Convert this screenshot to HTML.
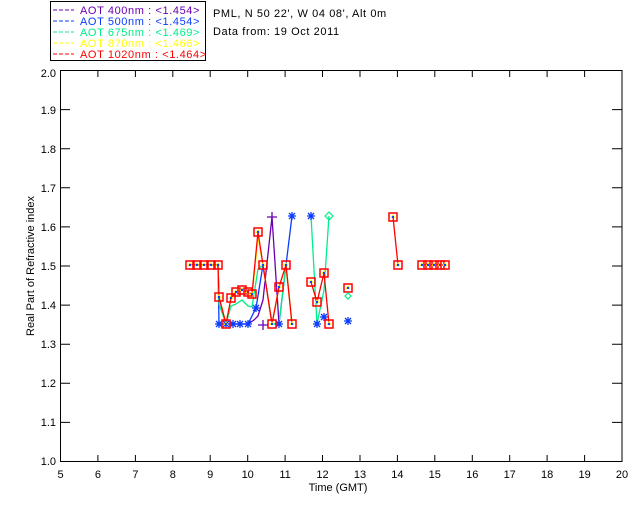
<!DOCTYPE html>
<html><head><style>
body{margin:0;background:#fff;width:640px;height:512px;overflow:hidden}
svg text{font-family:"Liberation Sans",sans-serif;font-size:11px}
.lg text{letter-spacing:0.6px}
</style></head><body>
<svg width="640" height="512" xmlns="http://www.w3.org/2000/svg">
<defs>
<g id="st" stroke="#0a3cff" stroke-width="1.3"><path d="M-4,0h8M0,-4v8M-3,-3l6,6M3,-3l-6,6"/></g>
<g id="sq"><path d="M0,-3l-2.5,4h5z" fill="#ffff00"/><rect x="-4" y="-4" width="8" height="8" fill="none" stroke="#ff0000" stroke-width="1.5"/><circle r="1.2" fill="#0a3cff"/></g>
</defs>
<rect x="50.5" y="1.5" width="155" height="59" fill="none" stroke="#000"/>
<g stroke-width="1" stroke-dasharray="4,2">
<line x1="53" y1="10" x2="74" y2="10" stroke="#6a00b0"/>
<line x1="53" y1="21" x2="74" y2="21" stroke="#0a3cff"/>
<line x1="53" y1="32" x2="74" y2="32" stroke="#00ee88"/>
<line x1="53" y1="43" x2="74" y2="43" stroke="#ffff00"/>
<line x1="53" y1="54" x2="74" y2="54" stroke="#ff0000"/>
</g>
<g class="lg">
<text x="80" y="14" fill="#6a00b0">AOT  400nm : &lt;1.454&gt;</text>
<text x="80" y="25" fill="#0a3cff">AOT  500nm : &lt;1.454&gt;</text>
<text x="80" y="36" fill="#00ee88">AOT  675nm : &lt;1.469&gt;</text>
<text x="80" y="47" fill="#ffff00">AOT  870nm : &lt;1.466&gt;</text>
<text x="80" y="58" fill="#ff0000">AOT 1020nm : &lt;1.464&gt;</text>
<text x="213" y="17" fill="#000">PML, N 50 22', W 04 08', Alt 0m</text>
<text x="213" y="35" fill="#000">Data from: 19 Oct 2011</text>
</g>
<rect x="60.5" y="70.5" width="561.5" height="391" fill="none" stroke="#000"/>
<g stroke="#000">
<path d="M97.9 461v-6M135.4 461v-6M172.8 461v-6M210.2 461v-6M247.7 461v-6M285.1 461v-6M322.5 461v-6M360 461v-6M397.4 461v-6M434.8 461v-6M472.3 461v-6M509.7 461v-6M547.1 461v-6M584.6 461v-6"/>
<path d="M97.9 71v6M135.4 71v6M172.8 71v6M210.2 71v6M247.7 71v6M285.1 71v6M322.5 71v6M360 71v6M397.4 71v6M434.8 71v6M472.3 71v6M509.7 71v6M547.1 71v6M584.6 71v6"/>
<path d="M61 109.6h9M61 148.7h9M61 187.8h9M61 226.9h9M61 266h9M61 305.1h9M61 344.2h9M61 383.3h9M61 422.4h9"/>
<path d="M622 109.6h-10M622 148.7h-10M622 187.8h-10M622 226.9h-10M622 266h-10M622 305.1h-10M622 344.2h-10M622 383.3h-10M622 422.4h-10"/>
</g>
<g fill="#000" text-anchor="end">
<text x="56" y="77">2.0</text><text x="56" y="114">1.9</text><text x="56" y="153">1.8</text><text x="56" y="192">1.7</text><text x="56" y="231">1.6</text><text x="56" y="270">1.5</text><text x="56" y="309">1.4</text><text x="56" y="348">1.3</text><text x="56" y="387">1.2</text><text x="56" y="426">1.1</text><text x="56" y="465">1.0</text>
</g>
<g fill="#000" text-anchor="middle">
<text x="60.5" y="478">5</text><text x="97.9" y="478">6</text><text x="135.4" y="478">7</text><text x="172.8" y="478">8</text><text x="210.2" y="478">9</text><text x="247.7" y="478">10</text><text x="285.1" y="478">11</text><text x="322.5" y="478">12</text><text x="360" y="478">13</text><text x="397.4" y="478">14</text><text x="434.8" y="478">15</text><text x="472.3" y="478">16</text><text x="509.7" y="478">17</text><text x="547.1" y="478">18</text><text x="584.6" y="478">19</text><text x="622" y="478">20</text>
<text x="338" y="491">Time (GMT)</text>
<text transform="translate(34 266) rotate(-90)">Real Part of Refractive index</text>
</g>
<g fill="none" stroke-width="1.3">
<polyline stroke="#6a00b0" points="190,265 218,265 219,297 226,324 233,324 240,324 248,324 254,320 258,316 263,300 272,217 279,324"/>
<polyline stroke="#0a3cff" points="190,265 218,265 219,324 226,324 233,324 240,324 248,324 256,308 263,265 272,324 279,324 286,265 292,216"/>
<polyline stroke="#00ee88" points="190,265 218,265 219,304 226,324 231,306 236,304 242,300 248,306 252,307 258,269 263,265 272,324 279,324 286,265 292,324"/>
<polyline stroke="#ffff00" points="190,265 218,265 219,296 226,324 231,298 236,292 242,290 248,292 252,297 258,238 263,265 272,324 279,287 286,265 292,324"/>
<polyline stroke="#ff0000" points="190,265 218,265 219,297 226,324 231,298 236,292 242,290 248,292 252,294 258,232 263,265 272,324 279,287 286,265 292,324"/>
<polyline stroke="#00ee88" points="311,216 317,324 324,290 329,216"/>
<polyline stroke="#ff0000" points="311,282 317,302 324,273 329,324"/>
<polyline stroke="#ff0000" points="393,217 398,265"/>
<line x1="422" y1="265" x2="445" y2="265" stroke="#ff0000"/>
</g>
<g>
<use href="#st" x="219" y="324"/><use href="#st" x="226" y="324"/><use href="#st" x="233" y="324"/><use href="#st" x="240" y="324"/><use href="#st" x="248" y="324"/><use href="#st" x="256" y="308"/><use href="#st" x="279" y="324"/><use href="#st" x="292" y="216"/><use href="#st" x="311" y="216"/><use href="#st" x="317" y="324"/><use href="#st" x="324" y="317"/><use href="#st" x="348" y="321"/>
</g>
<g>
<use href="#sq" x="190" y="265"/><use href="#sq" x="197" y="265"/><use href="#sq" x="204" y="265"/><use href="#sq" x="211" y="265"/><use href="#sq" x="218" y="265"/>
<use href="#sq" x="219" y="297"/><use href="#sq" x="226" y="324"/><use href="#sq" x="231" y="298"/><use href="#sq" x="236" y="292"/><use href="#sq" x="242" y="290"/><use href="#sq" x="248" y="292"/><use href="#sq" x="252" y="294"/><use href="#sq" x="258" y="232"/><use href="#sq" x="263" y="265"/><use href="#sq" x="272" y="324"/><use href="#sq" x="279" y="287"/><use href="#sq" x="286" y="265"/><use href="#sq" x="292" y="324"/>
<use href="#sq" x="311" y="282"/><use href="#sq" x="317" y="302"/><use href="#sq" x="324" y="273"/><use href="#sq" x="329" y="324"/><use href="#sq" x="348" y="288"/>
<use href="#sq" x="393" y="217"/><use href="#sq" x="398" y="265"/>
<use href="#sq" x="422" y="265"/><use href="#sq" x="428" y="265"/><use href="#sq" x="434" y="265"/><use href="#sq" x="440" y="265"/><use href="#sq" x="445" y="265"/>
</g>
<path d="M272,212v10M267,217h10M263,320v10M258,325h10" stroke="#6a00b0" stroke-width="1.3"/>
<path d="M329,212l-4,4l4,4l4,-4z M348,293l-3,3l3,3l3,-3z" fill="none" stroke="#00ee88" stroke-width="1.2"/>
</svg>
</body></html>
